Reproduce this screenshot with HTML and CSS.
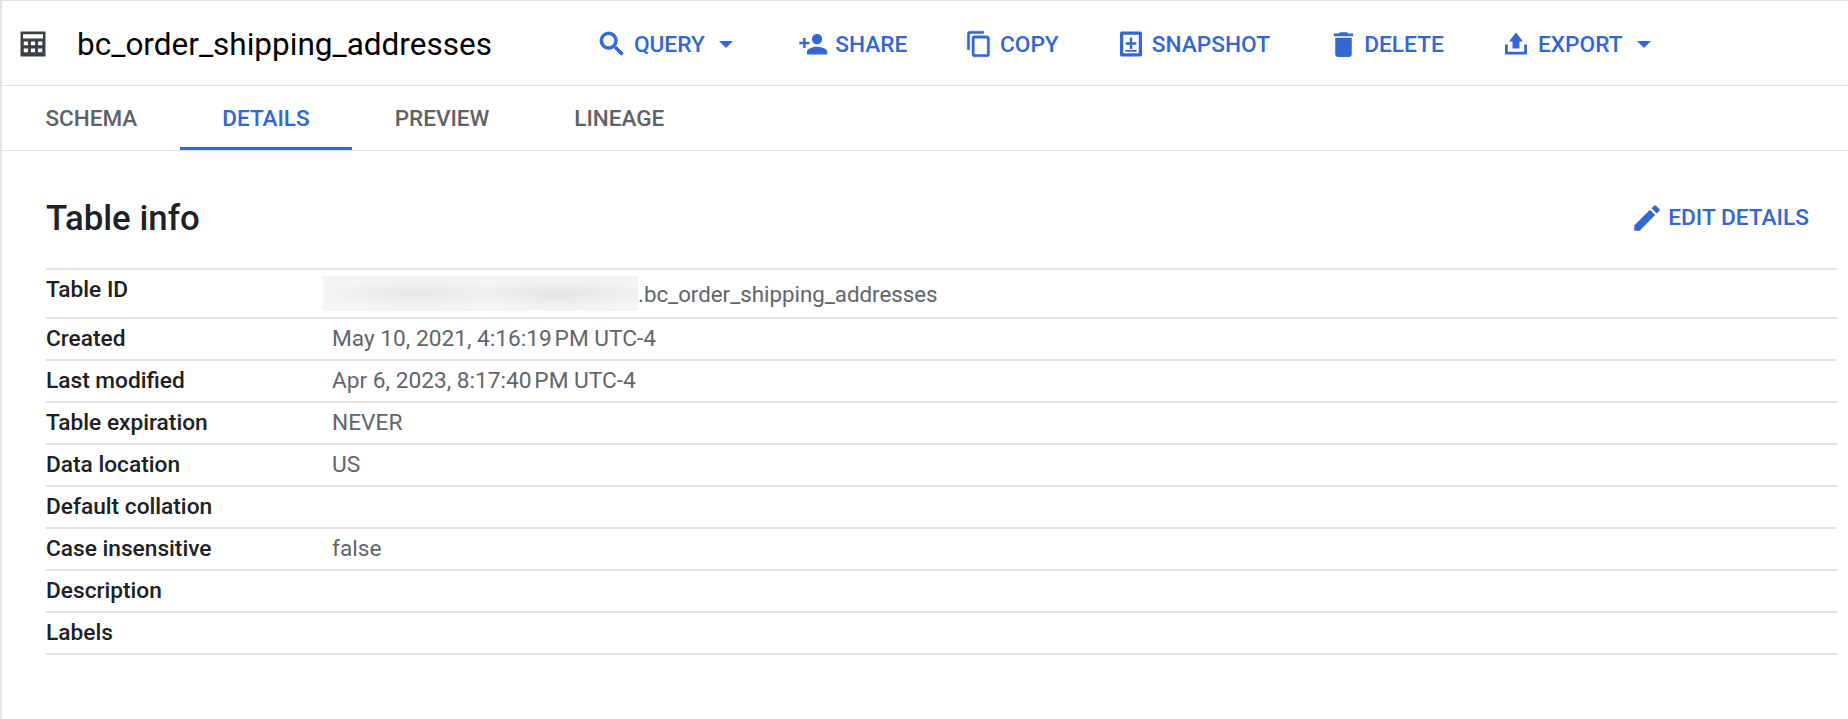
FILE: index.html
```html
<!DOCTYPE html>
<html lang="en">
<head>
<meta charset="utf-8">
<title>bc_order_shipping_addresses</title>
<link rel="stylesheet" href="styles.css">
</head>
<body>
<div class="page">
  <header class="toolbar">
    <svg class="table-icon" viewBox="0 0 24 24"><path d="M2 2h20v20H2z M4 4.200v3.400h16V4.200z M4.600 10v3h3.400v-3z M10.300 10v3h3.400v-3z M16 10v3h3.400v-3z M4.600 15.600v3h3.400v-3z M10.300 15.600v3h3.400v-3z M16 15.600v3h3.400v-3z" fill-rule="evenodd"/></svg>
    <h1 class="title">bc_order_shipping_addresses</h1>
    <nav class="actions">
      <a class="action action-query"><svg class="icon icon-query" viewBox="0 0 24 24"><path d="M15.500 14h-.79l-.28-.27A6.470 6.470 0 0 0 16 9.500 6.500 6.500 0 1 0 9.500 16c1.610 0 3.090-.59 4.230-1.570l.27.28v.79l5 4.990L20.490 19l-4.990-5zm-6 0C7.010 14 5 11.990 5 9.500S7.010 5 9.500 5 14 7.010 14 9.500 11.990 14 9.500 14z"/></svg>QUERY<svg class="caret" viewBox="0 0 14 7"><path d="M0 0h14L7 7z"/></svg></a>
      <a class="action action-share"><svg class="icon icon-share" viewBox="0 0 24 24"><path d="M15 12c2.210 0 4-1.790 4-4s-1.790-4-4-4-4 1.790-4 4 1.790 4 4 4zm-9-2V7H4v3H1v2h3v3h2v-3h3v-2H6zm9 4c-2.670 0-8 1.340-8 4v2h16v-2c0-2.660-5.330-4-8-4z"/></svg>SHARE</a>
      <a class="action action-copy"><svg class="icon icon-copy" viewBox="0 0 24 24"><path d="M16 1H4c-1.100 0-2 .9-2 2v14h2V3h12V1zm3 4H8c-1.100 0-2 .9-2 2v14c0 1.100.9 2 2 2h11c1.100 0 2-.9 2-2V7c0-1.100-.9-2-2-2zm0 16H8V7h11v14z"/></svg>COPY</a>
      <a class="action action-snapshot"><svg class="icon icon-snapshot" viewBox="0 0 24 24"><path fill-rule="evenodd" d="M4.700 2h14.600c.9 0 1.500.6 1.500 1.500v17c0 .9-.6 1.500-1.500 1.500H4.700c-.9 0-1.500-.6-1.500-1.500v-17c0-.9.6-1.500 1.500-1.500zm1.100 2.600v14.800h12.400V4.600H5.800zM11 6.800h2v3.700h3.300v2H13V16h-2v-3.500H7.700v-2H11V6.800zM7.500 16.700h9v1.500h-9v-1.500z"/></svg>SNAPSHOT</a>
      <a class="action action-delete"><svg class="icon icon-delete" viewBox="0 0 24 24"><path d="M6 19c0 1.100.9 2 2 2h8c1.100 0 2-.9 2-2V7H6v12zM19 4h-3.500l-1-1h-5l-1 1H5v2h14V4z"/></svg>DELETE</a>
      <a class="action action-export"><svg class="icon icon-export" viewBox="0 0 24 24"><path d="M12 2.800l5.600 7.200h-2.800v5.600H9.200V10H6.400zM3.200 12.400h2.200v5.800h13.200v-5.800h2.200v8H3.200z"/></svg>EXPORT<svg class="caret" viewBox="0 0 14 7"><path d="M0 0h14L7 7z"/></svg></a>
    </nav>
  </header>
  <div class="tabs">
    <a class="tab">SCHEMA</a>
    <a class="tab tab-active">DETAILS</a>
    <a class="tab">PREVIEW</a>
    <a class="tab">LINEAGE</a>
  </div>
  <main class="content">
    <div class="info-head">
      <h2 class="info-title">Table info</h2>
      <a class="action edit"><svg class="icon icon-edit" viewBox="0 0 24 24"><path d="M3 17.250V21h3.750L17.810 9.940l-3.750-3.750L3 17.250zM20.710 7.040a1 1 0 0 0 0-1.410l-2.340-2.340a1 1 0 0 0-1.410 0l-1.830 1.830 3.750 3.750 1.830-1.830z"/></svg>EDIT DETAILS</a>
    </div>
    <div class="rows">
      <div class="row row-id"><div class="label">Table ID</div><div class="value value-id"><span class="redacted"></span><span class="full-id">.bc_order_shipping_addresses</span></div></div>
      <div class="row"><div class="label">Created</div><div class="value">May 10, 2021, 4:16:19&#8239;PM UTC-4</div></div>
      <div class="row"><div class="label">Last modified</div><div class="value">Apr 6, 2023, 8:17:40&#8239;PM UTC-4</div></div>
      <div class="row"><div class="label">Table expiration</div><div class="value">NEVER</div></div>
      <div class="row"><div class="label">Data location</div><div class="value">US</div></div>
      <div class="row"><div class="label">Default collation</div><div class="value"></div></div>
      <div class="row"><div class="label">Case insensitive</div><div class="value">false</div></div>
      <div class="row"><div class="label">Description</div><div class="value"></div></div>
      <div class="row"><div class="label">Labels</div><div class="value"></div></div>
    </div>
  </main>
</div>
</body>
</html>
```

FILE: styles.css
```css
* { box-sizing: border-box; }
html, body { margin: 0; height: 100%; background: #fff; }
body { font-family: Roboto, "Liberation Sans", sans-serif; overflow: hidden; }
.page { height: 719px; border-top: 1px solid #e0e0e0; border-left: 2px solid #e4e4e4; }

.toolbar { display: flex; align-items: center; height: 85px; padding-top: 2px; border-bottom: 1px solid #e0e0e0; padding-left: 16px; }
.table-icon { width: 30px; height: 30px; fill: #3c4043; flex: none; margin-right: 29px; }
.title { margin: 0; font-size: 31.5px; font-weight: 400; color: #000; width: 413px; white-space: nowrap; }
.actions { display: flex; align-items: center; margin-left: 105.7px; }

.action { display: inline-flex; align-items: center; color: #3367d6; font-size: 22.7px; font-weight: 500; white-space: nowrap; }
.icon { fill: #3367d6; flex: none; }
.caret { width: 14px; height: 7px; fill: #3367d6; margin-left: 14px; }

.icon-query { width: 32px; height: 32px; margin-right: 6.2px; stroke: #3367d6; stroke-width: 0.7px; }
.icon-share { width: 30.5px; height: 30.5px; margin-right: 6.4px; }
.icon-copy { width: 28px; height: 28px; margin-right: 7.4px; stroke: #3367d6; stroke-width: 0.4px; }
.icon-snapshot { width: 30px; height: 30px; margin-right: 6px; }
.icon-delete { width: 33px; height: 33px; margin-right: 3.8px; }
.icon-export { width: 30px; height: 30px; margin-right: 7.2px; }
.icon-edit { width: 34px; height: 34px; margin-right: 4.5px; }

.action-query { margin-right: 65.5px; }
.action-share { margin-right: 57.2px; }
.action-copy { margin-right: 57px; }
.action-snapshot { margin-right: 57.4px; }
.action-delete { margin-right: 57px; }

.tabs { display: flex; height: 65px; padding-left: 1px; border-bottom: 1px solid #e0e0e0; }
.tab { display: flex; align-items: center; padding: 0 42.5px; height: 64px; font-size: 22.5px; font-weight: 500; color: #5f6368; }
.tab-active { color: #3367d6; border-bottom: 3px solid #3367d6; padding-top: 3px; }

.content { padding: 0 11px 0 44px; }
.info-head { display: flex; align-items: center; justify-content: space-between; height: 117px; padding: 16px 28px 0 0; }
.info-title { margin: 0; font-size: 34.8px; font-weight: 500; color: #202124; }

.rows { border-top: 2px solid #e2e2e2; }
.row { display: flex; align-items: center; height: 42px; padding-bottom: 1px; border-bottom: 2px solid #e2e2e2; font-size: 22.7px; }
.row-id { height: 49px; padding-bottom: 0; }
.label { width: 286px; flex: none; font-weight: 500; color: #202124; }
.value { color: #62666a; }
.row-id .label { align-self: flex-start; padding-top: 6px; }
.value-id { display: flex; align-items: center; margin-left: -9px; }
.full-id { font-size: 22.3px; }
.redacted { width: 315px; height: 35px; background: radial-gradient(ellipse 90px 14px at 30% 50%, #e6e6e6, transparent), radial-gradient(ellipse 90px 14px at 75% 50%, #e3e3e3, transparent), #f4f4f4; }
```
